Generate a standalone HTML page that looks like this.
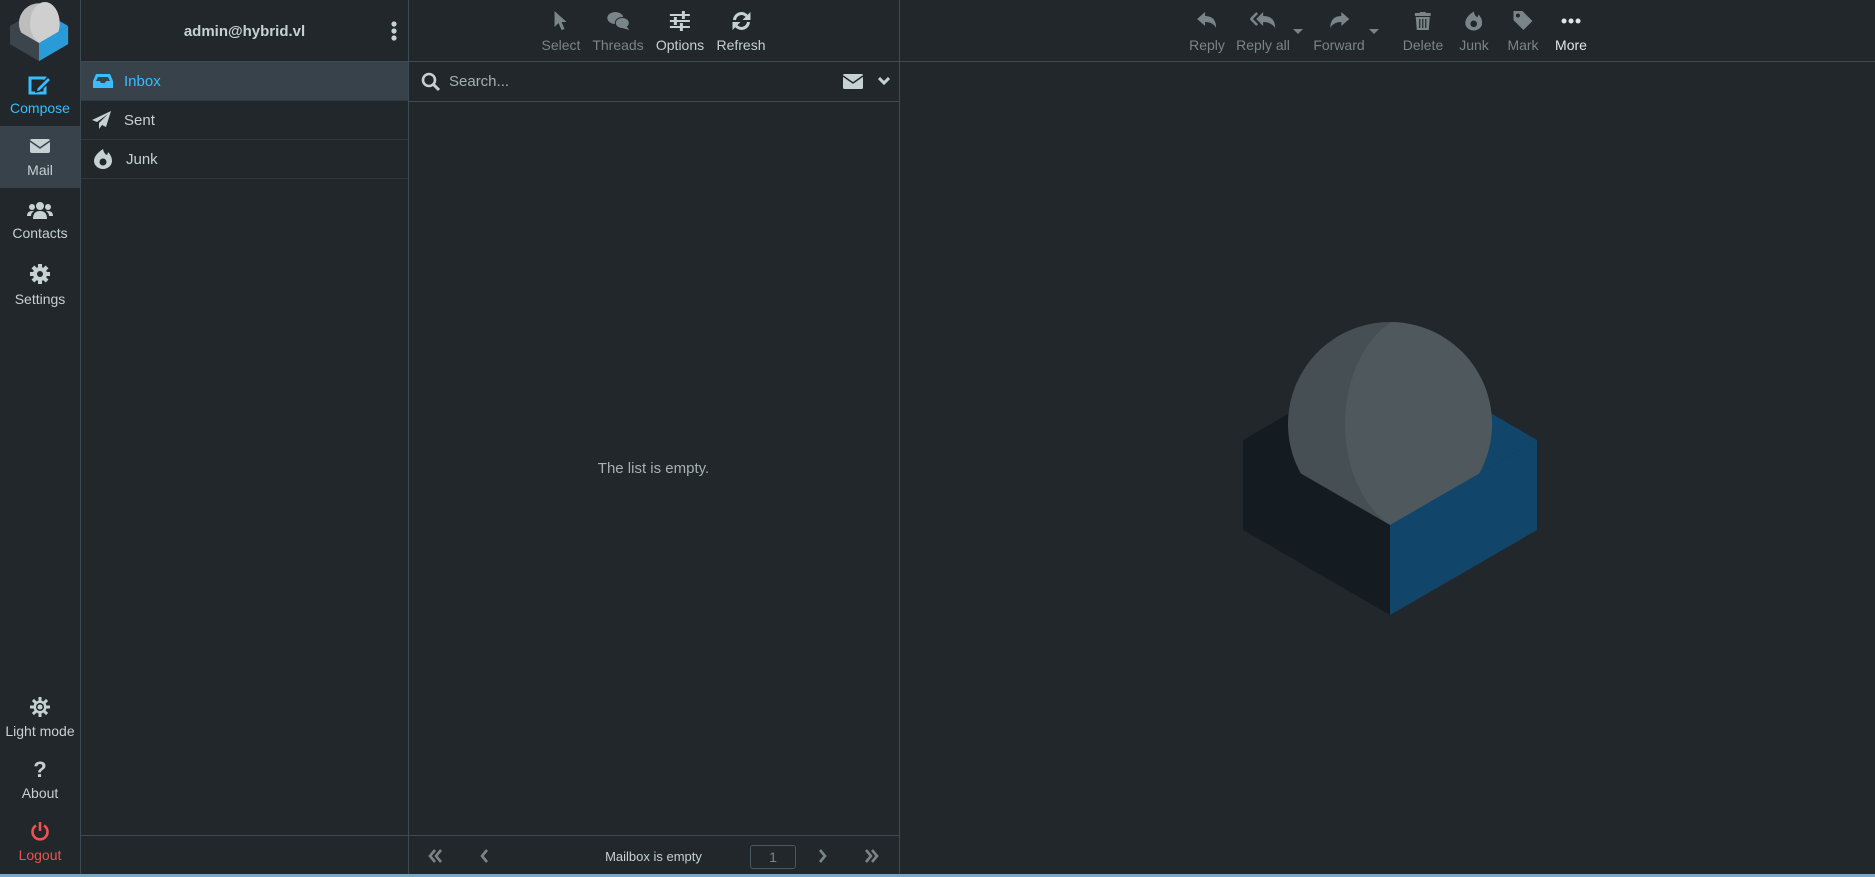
<!DOCTYPE html>
<html><head><meta charset="utf-8"><style>
*{box-sizing:border-box;margin:0;padding:0}
body{width:1875px;height:877px;background:#21272b;font-family:"Liberation Sans",sans-serif;color:#c5d1d3;position:relative;overflow:hidden;font-size:14px}
.abs{position:absolute}
.vl{position:absolute;top:0;width:1px;height:874px;background:#3d4a51}
.hl{position:absolute;height:1px;background:#3d4a51}
.nav{position:absolute;left:0;width:80px;text-align:center;font-size:14px}
.nav svg{display:block;margin:0 auto}
.tb{position:absolute;top:11px;text-align:center;font-size:14px;transform:translateX(-50%);white-space:nowrap}
.tb svg{display:block;margin:0 auto 6px}
.dim{color:#7a8589}
.fold{position:absolute;left:81px;width:327px;height:39px;display:flex;align-items:center;font-size:15px;border-bottom:1px solid #2f3a40}
.fold svg{margin:0 10px 0 11px}
</style></head><body>

<div class="vl" style="left:80px"></div>
<div class="vl" style="left:408px"></div>
<div class="vl" style="left:899px"></div>
<div class="hl" style="left:80px;top:61px;width:1795px"></div>
<div class="hl" style="left:408px;top:101px;width:491px"></div>
<div class="hl" style="left:80px;top:835px;width:819px"></div>
<div class="abs" style="left:0;top:874px;width:1875px;height:3px;background:#7aa6c8"></div>

<svg class="abs" style="left:0;top:0" width="80" height="64">
<g transform="translate(39,43) scale(0.197)">
<polygon points="-148,-86 0,-172 0,0" fill="#3b454b"/>
<polygon points="148,-86 0,-172 0,0" fill="#2b9ad8"/>
<circle cx="0" cy="-100" r="102" fill="#bdbdbd"/>
<ellipse cx="30" cy="-100" rx="75" ry="108" fill="#cfcfcf"/>
<polygon points="-148,-86 0,0 0,92 -148,6" fill="#3b454b"/>
<polygon points="148,-86 0,0 0,92 148,6" fill="#2b9ad8"/>
</g></svg>

<div class="nav" style="top:74px;color:#37beff">
<svg width="24" height="22" viewBox="0 0 24 22"><rect x="2" y="4" width="15" height="15" fill="none" stroke="#37beff" stroke-width="3"/><path d="M9 14 L20 3 L23 6 L12 17 L8 18Z" fill="#37beff" stroke="#21272b" stroke-width="1.5"/></svg>
<div style="margin-top:4px">Compose</div></div>
<div class="abs" style="left:0;top:126px;width:80px;height:62px;background:#37424a"></div>
<div class="nav" style="top:138px">
<svg width="22" height="16" viewBox="0 0 22 16"><rect x="1" y="1" width="20" height="14" rx="2" fill="#c5d1d3"/><path d="M1 3 L11 10 L21 3" fill="none" stroke="#37424a" stroke-width="1.5"/></svg>
<div style="margin-top:8px">Mail</div></div>
<div class="nav" style="top:201px">
<svg width="26" height="18" viewBox="0 0 26 18"><circle cx="13" cy="5" r="4" fill="#c5d1d3"/><circle cx="5" cy="6" r="3" fill="#c5d1d3"/><circle cx="21" cy="6" r="3" fill="#c5d1d3"/><path d="M6 18 Q6 10 13 10 Q20 10 20 18Z M0 15 Q0 10 5 10 L7 10 Q4 12 4 15Z M26 15 Q26 10 21 10 L19 10 Q22 12 22 15Z" fill="#c5d1d3"/></svg>
<div style="margin-top:6px">Contacts</div></div>
<div class="nav" style="top:264px">
<svg width="20" height="20" viewBox="0 0 20 20"><g fill="#c5d1d3"><circle cx="10" cy="10" r="7"/><rect x="8" y="0" width="4" height="20"/><rect x="0" y="8" width="20" height="4"/><rect x="8" y="0" width="4" height="20" transform="rotate(45 10 10)"/><rect x="8" y="0" width="4" height="20" transform="rotate(-45 10 10)"/></g><circle cx="10" cy="10" r="3" fill="#21272b"/></svg>
<div style="margin-top:7px">Settings</div></div>

<div class="nav" style="top:697px">
<svg width="20" height="20" viewBox="0 0 20 20"><g fill="#c5d1d3"><rect x="8.5" y="0" width="3" height="20"/><rect x="0" y="8.5" width="20" height="3"/><rect x="8.5" y="0" width="3" height="20" transform="rotate(45 10 10)"/><rect x="8.5" y="0" width="3" height="20" transform="rotate(-45 10 10)"/><circle cx="10" cy="10" r="6.5"/></g><circle cx="10" cy="10" r="4" fill="#21272b"/><circle cx="10" cy="10" r="2.5" fill="#c5d1d3"/></svg>
<div style="margin-top:6px">Light mode</div></div>
<div class="nav" style="top:759px">
<div style="font-weight:bold;font-size:22px;line-height:22px">?</div>
<div style="margin-top:4px">About</div></div>
<div class="nav" style="top:821px;color:#f25050">
<svg width="20" height="20" viewBox="0 0 20 20"><path d="M6 4.5 A7.5 7.5 0 1 0 14 4.5" fill="none" stroke="#f25050" stroke-width="2.6"/><rect x="8.7" y="1" width="2.6" height="9" fill="#f25050"/></svg>
<div style="margin-top:6px">Logout</div></div>

<div class="abs" style="left:81px;top:23px;width:327px;text-align:center;font-weight:bold;font-size:15px">admin@hybrid.vl</div>
<svg class="abs" style="left:390px;top:20px" width="8" height="22"><circle cx="4" cy="4" r="2.6" fill="#c5d1d3"/><circle cx="4" cy="11" r="2.6" fill="#c5d1d3"/><circle cx="4" cy="18" r="2.6" fill="#c5d1d3"/></svg>

<div class="fold" style="top:62px;background:#37424a;color:#37beff">
<svg width="22" height="16" viewBox="0 0 22 16"><path d="M1 8 L4 1 L18 1 L21 8 L21 15 L1 15Z" fill="#37beff"/><path d="M4 8 L6 4 L16 4 L18 8 L14 8 L13 10 L9 10 L8 8Z" fill="#37424a"/></svg>Inbox</div>
<div class="fold" style="top:101px">
<svg width="20" height="18" viewBox="0 0 20 18" style="margin-right:12px"><path d="M19 0 L0 9 L5 11 L16 3 L7 12 L7 18 L10 14 L14 16Z" fill="#c5d1d3"/></svg>Sent</div>
<div class="fold" style="top:140px">
<svg width="18" height="20" viewBox="0 0 18 20" style="margin-right:14px;margin-left:13px"><path d="M9 0 Q10 5 13 6 Q14 4 14 3 Q18 7 18 12 A9 8 0 0 1 0 12 Q0 6 9 0Z" fill="#c5d1d3"/><circle cx="9" cy="13" r="3.5" fill="#21272b"/></svg>Junk</div>

<div class="tb dim" style="left:561px"><svg width="14" height="20" viewBox="0 0 14 20"><path d="M1 0 L1 16 L5 12 L8 19 L11 18 L8 11 L13 11Z" fill="#7a8589"/></svg>Select</div>
<div class="tb dim" style="left:618px"><svg width="24" height="20" viewBox="0 0 24 20"><ellipse cx="9" cy="7" rx="8" ry="6" fill="#7a8589"/><ellipse cx="16" cy="12" rx="7" ry="5.5" fill="#7a8589" stroke="#21272b" stroke-width="1"/><path d="M20 15 L23 19 L16 17Z" fill="#7a8589"/></svg>Threads</div>
<div class="tb" style="left:680px"><svg width="22" height="20" viewBox="0 0 22 20"><g fill="#c5d1d3"><rect x="1" y="3" width="20" height="2"/><rect x="1" y="9" width="20" height="2"/><rect x="1" y="15" width="20" height="2"/><rect x="13" y="0" width="3" height="8"/><rect x="5" y="6" width="3" height="8"/><rect x="11" y="12" width="3" height="8"/></g></svg>Options</div>
<div class="tb" style="left:741px"><svg width="20" height="20" viewBox="0 0 20 20"><path d="M3 9 A7 7 0 0 1 16 6" fill="none" stroke="#c5d1d3" stroke-width="3"/><path d="M17 11 A7 7 0 0 1 4 14" fill="none" stroke="#c5d1d3" stroke-width="3"/><path d="M19 1 L19 9 L11 9Z M1 19 L1 11 L9 11Z" fill="#c5d1d3"/></svg>Refresh</div>

<svg class="abs" style="left:421px;top:72px" width="20" height="20" viewBox="0 0 20 20"><circle cx="8" cy="8" r="6" fill="none" stroke="#c5d1d3" stroke-width="2.6"/><path d="M12 12 L18 18" stroke="#c5d1d3" stroke-width="3"/></svg>
<div class="abs" style="left:449px;top:73px;font-size:15px;color:#a5b1b4">Search...</div>
<svg class="abs" style="left:843px;top:74px" width="20" height="15" viewBox="0 0 20 15"><rect x="0" y="0" width="20" height="15" rx="1.5" fill="#c5d1d3"/><path d="M0 2 L10 9 L20 2" fill="none" stroke="#21272b" stroke-width="1.5"/></svg>
<svg class="abs" style="left:878px;top:77px" width="12" height="9" viewBox="0 0 12 9"><path d="M1 1 L6 6 L11 1" fill="none" stroke="#c5d1d3" stroke-width="3"/></svg>

<div class="abs" style="left:408px;top:460px;width:491px;text-align:center;font-size:15px;color:#a5b1b4">The list is empty.</div>

<svg class="abs" style="left:428px;top:849px" width="16" height="14"><path d="M7 1 L2 7 L7 13 M13 1 L8 7 L13 13" fill="none" stroke="#7a8589" stroke-width="2.6"/></svg>
<svg class="abs" style="left:480px;top:849px" width="10" height="14"><path d="M7 1 L2 7 L7 13" fill="none" stroke="#7a8589" stroke-width="2.6"/></svg>
<div class="abs" style="left:408px;top:849px;width:491px;text-align:center;font-size:13px;color:#c5d1d3">Mailbox is empty</div>
<div class="abs" style="left:750px;top:845px;width:46px;height:24px;border:1px solid #4a575d;border-radius:3px;text-align:center;line-height:22px;color:#7a8589;font-size:14px">1</div>
<svg class="abs" style="left:817px;top:849px" width="10" height="14"><path d="M3 1 L8 7 L3 13" fill="none" stroke="#7a8589" stroke-width="2.6"/></svg>
<svg class="abs" style="left:864px;top:849px" width="16" height="14"><path d="M2 1 L7 7 L2 13 M8 1 L13 7 L8 13" fill="none" stroke="#7a8589" stroke-width="2.6"/></svg>

<div class="tb dim" style="left:1207px"><svg width="20" height="20" viewBox="0 -1 20 20"><path d="M0 7 L8 0 L8 4 Q19 4 19 16 Q16 10 8 10 L8 14Z" fill="#7a8589"/></svg>Reply</div>
<div class="tb dim" style="left:1263px"><svg width="26" height="20" viewBox="0 -1 26 20"><path d="M6 7 L13 0 L13 4 Q25 4 25 16 Q21 10 13 10 L13 14Z" fill="#7a8589"/><path d="M7 1 L1 7 L7 13" fill="none" stroke="#7a8589" stroke-width="2.5"/></svg>Reply all</div>
<svg class="abs" style="left:1293px;top:29px" width="10" height="6"><path d="M0 0 L10 0 L5 5Z" fill="#7a8589"/></svg>
<div class="tb dim" style="left:1339px"><svg width="20" height="20" viewBox="0 -1 20 20"><path d="M20 7 L12 0 L12 4 Q1 4 1 16 Q4 10 12 10 L12 14Z" fill="#7a8589"/></svg>Forward</div>
<svg class="abs" style="left:1369px;top:29px" width="10" height="6"><path d="M0 0 L10 0 L5 5Z" fill="#7a8589"/></svg>
<div class="tb dim" style="left:1423px"><svg width="16" height="20" viewBox="0 -1 16 20"><rect x="0" y="1" width="16" height="3" fill="#7a8589"/><rect x="5" y="0" width="6" height="2" fill="#7a8589"/><path d="M1 5 L15 5 L14 18 L2 18Z" fill="#7a8589"/><path d="M5 7 L5 16 M8 7 L8 16 M11 7 L11 16" stroke="#21272b" stroke-width="1.2"/></svg>Delete</div>
<div class="tb dim" style="left:1474px"><svg width="17" height="20" viewBox="0 0 18 20"><path d="M9 0 Q10 5 13 6 Q14 4 14 3 Q18 7 18 12 A9 8 0 0 1 0 12 Q0 6 9 0Z" fill="#7a8589"/><circle cx="9" cy="13" r="3.5" fill="#21272b"/></svg>Junk</div>
<div class="tb dim" style="left:1523px"><svg width="20" height="20" viewBox="0 0 20 20"><path d="M0 0 L9 0 L19 10 L10 19 L0 9Z" fill="#7a8589"/><circle cx="4.5" cy="4.5" r="2" fill="#21272b"/></svg>Mark</div>
<div class="tb" style="left:1571px;color:#e0e6e7"><svg width="20" height="20" viewBox="0 -1 20 20"><circle cx="3" cy="9" r="2.5" fill="#e0e6e7"/><circle cx="10" cy="9" r="2.5" fill="#e0e6e7"/><circle cx="17" cy="9" r="2.5" fill="#e0e6e7"/></svg>More</div>

<svg class="abs" style="left:0;top:0" width="1875" height="877">
<defs><clipPath id="cc"><circle cx="1390" cy="424" r="102"/></clipPath></defs>
<g transform="translate(1390,525)">
<polygon points="-147,-85 0,-170 0,0" fill="#151c21"/>
<polygon points="147,-85 0,-170 0,0" fill="#11466a"/>
</g>
<circle cx="1390" cy="424" r="102" fill="#464f53"/>
<ellipse cx="1424" cy="424" rx="79" ry="112" fill="#4f585c" clip-path="url(#cc)"/>
<g transform="translate(1390,525)">
<polygon points="-147,-85 0,0 0,90 -147,5" fill="#151c21"/>
<polygon points="147,-85 0,0 0,90 147,5" fill="#11466a"/>
</g>
</svg>
</body></html>
